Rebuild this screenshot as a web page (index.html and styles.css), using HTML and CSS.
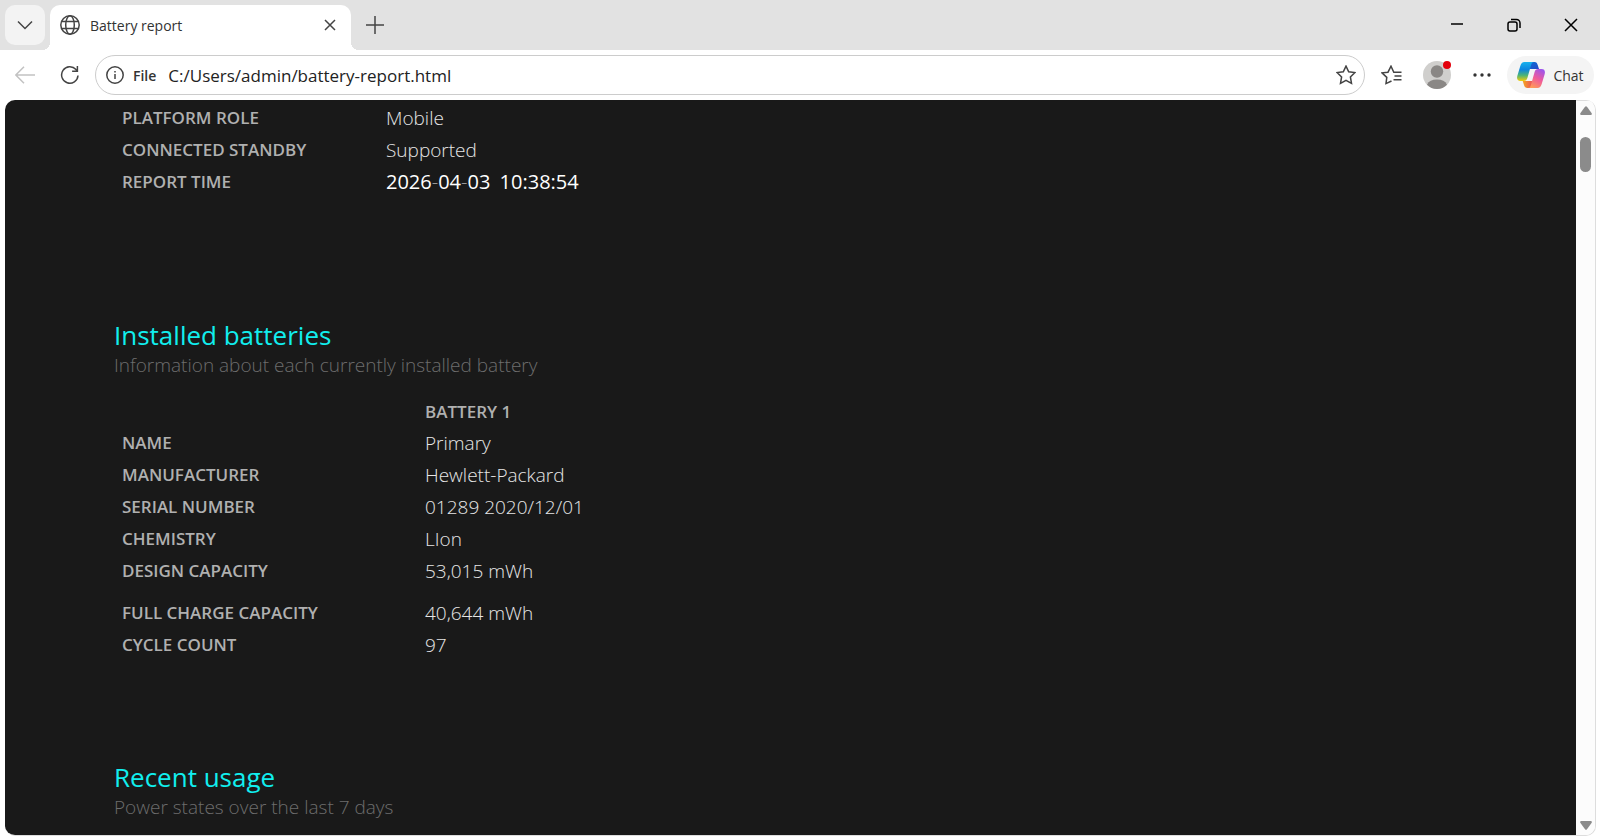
FILE: index.html
```html
<!DOCTYPE html>
<html lang="en">
<head>
  <meta charset="UTF-8">
  <title>Battery report</title>
  <link rel="stylesheet" href="styles.css">
</head>
<body>
<div class="browser">
  <!-- tab strip -->
  <header class="tabs">
    <button class="tab-search" aria-label="Search tabs">
      <svg width="16" height="10" viewBox="0 0 16 10"><path d="M1 1.5l7 7 7-7"/></svg>
    </button>
    <div class="tab">
      <svg width="20" height="20" viewBox="0 0 20 20"><circle cx="10" cy="10" r="9.2"/><ellipse cx="10" cy="10" rx="4.3" ry="9.2"/><path d="M1.6 6.6h16.8M1.6 13.4h16.8"/></svg>
      <span class="tab-title">Battery report</span>
      <button class="tab-close" aria-label="Close tab">
        <svg width="12" height="12" viewBox="0 0 12 12"><path d="M1 1l10 10M11 1L1 11"/></svg>
      </button>
    </div>
    <button class="new-tab" aria-label="New tab">
      <svg width="18" height="18" viewBox="0 0 18 18"><path d="M9 0v18M0 9h18"/></svg>
    </button>
    <div class="window-buttons">
      <button aria-label="Minimize"><svg width="14" height="14" viewBox="0 0 14 14"><path d="M1 6h12"/></svg></button>
      <button aria-label="Restore"><svg width="14" height="14" viewBox="0 0 14 14"><rect x="1" y="4" width="9" height="9" rx="2"/><path d="M4 1.5h5.5a3.5 3.5 0 0 1 3.5 3.5v5"/></svg></button>
      <button aria-label="Close"><svg width="14" height="14" viewBox="0 0 14 14"><path d="M1 1l12 12M13 1L1 13"/></svg></button>
    </div>
  </header>

  <!-- toolbar -->
  <nav class="toolbar">
    <button class="back" aria-label="Back" disabled>
      <svg width="20" height="18" viewBox="0 0 20 18"><path d="M20 9H1M9 .8L.8 9 9 17.2"/></svg>
    </button>
    <button class="reload" aria-label="Refresh">
      <svg width="20" height="20" viewBox="0 0 20 20"><path d="M18 10.5A8.2 8.2 0 1 1 16 4.6L17.3 6M17.4 1v5.2h-5.3"/></svg>
    </button>
    <div class="address">
      <svg width="18" height="18" viewBox="0 0 18 18"><circle cx="9" cy="9" r="8.2"/><path d="M9 8v5M9 5v1.5"/></svg>
      <label for="url">File</label>
      <input id="url" type="text" value="C:/Users/admin/battery-report.html">
      <button aria-label="Add to favorites">
        <svg width="20" height="20" viewBox="0 0 20 20"><path d="M10 1.1l2.7 5.7 6.2.8-4.5 4.3 1.1 6.4-5.5-3-5.5 3 1.1-6.4L1.1 7.6l6.2-.8z"/></svg>
      </button>
    </div>
    <button class="favorites" aria-label="Favorites">
      <svg width="21" height="20" viewBox="0 0 21 20"><path d="M10.500 16l-5.500 2.600.8-6.200L1 7.800l6-.6L10 1.200l2.800 6H20.500M13.500 11h7M12.500 14.800h8"/></svg>
    </button>
    <button class="profile" aria-label="Profile">
      <svg width="28" height="28" viewBox="0 0 28 28"><circle class="disc" cx="14" cy="14" r="14"/><circle class="person" cx="14" cy="10.5" r="6.2"/><path class="person" d="M4 23.7a10.6 7.6 0 0 1 20 0A14 14 0 0 1 4 23.7z"/></svg>
      <span class="dot"></span>
    </button>
    <button class="more" aria-label="Settings and more">
      <svg width="18" height="4" viewBox="0 0 18 4"><circle cx="2" cy="2" r="1.7"/><circle cx="9" cy="2" r="1.7"/><circle cx="16" cy="2" r="1.7"/></svg>
    </button>
    <button class="chat">
      <svg width="28" height="26" viewBox="0 0 28 26">
        <defs>
          <linearGradient id="blue" x1="0" y1="0" x2="0" y2="1"><stop offset="0" stop-color="#18b2ed"/><stop offset=".4" stop-color="#0d85df"/><stop offset=".7" stop-color="#4bb477"/><stop offset="1" stop-color="#f4cc08"/></linearGradient>
          <linearGradient id="pink" x1=".8" y1="0" x2=".3" y2="1"><stop offset="0" stop-color="#9a55ef"/><stop offset=".5" stop-color="#ef5a9b"/><stop offset="1" stop-color="#ff9a58"/></linearGradient>
          <linearGradient id="navy" x1="0" y1="0" x2="1" y2="1"><stop offset="0" stop-color="#0d6fd6"/><stop offset="1" stop-color="#2548c7"/></linearGradient>
          <linearGradient id="red" x1="0" y1="0" x2="1" y2="0"><stop offset="0" stop-color="#f6a61c"/><stop offset="1" stop-color="#ea4b62"/></linearGradient>
        </defs>
        <path fill="url(#navy)" d="M13 0h4.500c2 0 2.600 1 3.200 3l1.300 4H12z"/>
        <path fill="url(#red)" d="M15 26h-4.500c-2 0-2.900-1-3.500-3l-1.300-4H16z"/>
        <path fill="url(#blue)" d="M7.500 0H17c-2 0-2.400 1.300-3 3.300L10.400 16c-.7 2.200-1.700 3-3.700 3H3.500C.5 19-.4 17 .3 14L3.300 4C4.200 1.200 5.200 0 7.500 0z"/>
        <path fill="url(#pink)" d="M20.500 26H11c2 0 2.400-1.300 3-3.300L17.600 10c.7-2.200 1.700-3 3.700-3h3.200c3 0 3.900 2 3.200 5l-3 10c-.9 2.800-1.900 4-4.200 4z"/>
      </svg>
      Chat
    </button>
  </nav>

  <div class="view">
    <main class="report">
      <table class="system">
        <tr><th scope="row">PLATFORM ROLE</th><td>Mobile</td></tr>
        <tr><th scope="row">CONNECTED STANDBY</th><td>Supported</td></tr>
        <tr><th scope="row">REPORT TIME</th><td class="time">2026<i>-</i>04<i>-</i>03 <span>10:38:54</span></td></tr>
      </table>

      <h2>Installed batteries</h2>
      <p>Information about each currently installed battery</p>
      <table class="batteries">
        <thead>
          <tr><td></td><th scope="col">BATTERY 1</th></tr>
        </thead>
        <tbody>
          <tr><th scope="row">NAME</th><td>Primary</td></tr>
          <tr><th scope="row">MANUFACTURER</th><td>Hewlett-Packard</td></tr>
          <tr><th scope="row">SERIAL NUMBER</th><td>01289 2020/12/01</td></tr>
          <tr><th scope="row">CHEMISTRY</th><td>LIon</td></tr>
          <tr><th scope="row">DESIGN CAPACITY</th><td>53,015 mWh</td></tr>
        </tbody>
        <tbody class="charge">
          <tr><th scope="row">FULL CHARGE CAPACITY</th><td>40,644 mWh</td></tr>
          <tr><th scope="row">CYCLE COUNT</th><td>97</td></tr>
        </tbody>
      </table>

      <h2 class="usage">Recent usage</h2>
      <p>Power states over the last 7 days</p>
    </main>
    <div class="scrollbar">
      <button aria-label="Scroll up"><svg width="12" height="9" viewBox="0 0 12 9"><path d="M5 .8q1-1.300 2 0l4.700 6.400q.6 1.600-1 1.800H1.300q-1.600-.2-1-1.800z"/></svg></button>
      <div class="thumb"></div>
      <button aria-label="Scroll down"><svg width="12" height="9" viewBox="0 0 12 9"><path d="M5 8.200q1 1.300 2 0l4.700-6.400q.6-1.600-1-1.800H1.300q-1.600.2-1 1.800z"/></svg></button>
    </div>
  </div>
</div>
</body>
</html>
```
FILE: styles.css
```css
* {
  box-sizing: border-box;
}

body {
  margin: 0;
  font-family: "Open Sans", "Noto Sans", sans-serif;
  color: #333;
  background: #fff;
}

button {
  display: flex;
  align-items: center;
  justify-content: center;
  flex: none;
  padding: 0;
  border: 0;
  background: none;
  font: inherit;
  color: inherit;
}

svg {
  flex: none;
  fill: none;
  stroke: #444;
  stroke-width: 1.5;
}

.browser {
  display: flex;
  flex-direction: column;
  height: 100vh;
}

/* tab strip */
.tabs {
  display: flex;
  flex: none;
  height: 50px;
  padding: 5px 0 0 5px;
  background: #e2e2e2;
}

.tab-search {
  width: 40px;
  height: 40px;
  border-radius: 10px;
  background: #f3f3f3;
}

.tab {
  position: relative;
  display: flex;
  align-items: center;
  gap: 10px;
  width: 301px;
  margin-left: 5px;
  padding: 0 10px 5px;
  border-radius: 10px 10px 0 0;
  background: #fff;
}

/* curved feet of the active tab */
.tab::before,
.tab::after {
  content: "";
  position: absolute;
  bottom: 0;
  width: 8px;
  height: 8px;
}

.tab::before {
  right: 100%;
  background: radial-gradient(circle at 0 0, transparent 8px, #fff 8px);
}

.tab::after {
  left: 100%;
  background: radial-gradient(circle at 100% 0, transparent 8px, #fff 8px);
}

.tab-title {
  flex: 1;
  font-size: 14px;
}

.tab-close {
  width: 22px;
  height: 22px;
}

.new-tab {
  width: 40px;
  height: 40px;
  margin-left: 4px;
}

.window-buttons {
  display: flex;
  margin-left: auto;
  padding-right: 1px;
}

.window-buttons button {
  width: 57px;
  height: 40px;
}

.window-buttons svg {
  stroke: #000;
  stroke-width: 1.5;
}

/* toolbar */
.toolbar {
  display: flex;
  align-items: center;
  flex: none;
  height: 50px;
  padding: 0 6px 0 5px;
}

.toolbar > button {
  width: 45px;
  height: 38px;
}

.toolbar .back {
  width: 40px;
}

.toolbar .reload {
  width: 50px;
}

.back svg {
  stroke: #c2c2c2;
}

.address {
  display: flex;
  align-items: center;
  flex: 1;
  height: 40px;
  margin-right: 4px;
  padding: 0 8px 0 10px;
  border: 1px solid #ccc;
  border-radius: 20px;
}

.address label {
  margin: 0 12px 0 9px;
  font-size: 14px;
  font-weight: 600;
}

.address input {
  flex: 1;
  min-width: 0;
  padding: 0;
  border: 0;
  outline: 0;
  font: 17px "Open Sans", "Noto Sans", sans-serif;
  color: #222;
}

.profile {
  position: relative;
}

.profile svg {
  stroke: none;
}

.disc {
  fill: #d0cfcd;
}

.person {
  fill: #8a8785;
}

.dot {
  position: absolute;
  top: 5px;
  right: 8px;
  width: 8px;
  height: 8px;
  border-radius: 50%;
  background: #e3000b;
}

.more svg {
  fill: #333;
  stroke: none;
}

.toolbar .chat {
  gap: 8px;
  width: 87px;
  margin-left: 3px;
  border-radius: 19px;
  background: #f4f4f4;
  font-size: 14px;
}

.chat svg {
  stroke: none;
}

/* page area */
.view {
  display: flex;
  flex: 1;
  min-height: 0;
  margin: 0 4px 4px 5px;
  border-right: 1px solid #ddd;
  border-bottom: 1px solid #ddd;
  border-radius: 10px;
  overflow: hidden;
}

.report {
  flex: 1;
  padding: 2px 0 0 109px;
  background: #191919;
  color: #e6e6e6;
  overflow: hidden;
}

.scrollbar {
  display: flex;
  flex-direction: column;
  align-items: center;
  width: 19px;
  border-top: 1px solid #ddd;
  background: #fcfcfc;
}

.scrollbar button {
  width: 19px;
  height: 19px;
}

.scrollbar svg {
  fill: #8b8b8b;
  stroke: none;
}

.thumb {
  width: 11px;
  height: 35px;
  margin: 17px 0 auto;
  border-radius: 6px;
  background: #8b8b8b;
}

table {
  border-collapse: collapse;
}

th,
td {
  height: 32px;
  padding: 0 8px;
  text-align: left;
  white-space: nowrap;
  line-height: 24px;
}

th {
  font-size: 17px;
  font-weight: 600;
  color: #b0b0b0;
}

td {
  font-size: 19px;
  font-weight: 300;
}

.system th {
  width: 264px;
}

.time {
  font-size: 20px;
  font-weight: 500;
  color: #fff;
}

.time i {
  font-style: normal;
  font-weight: 300;
  color: #999;
}

.time span {
  margin-left: 4px;
}

.batteries {
  margin-top: 19px;
}

.batteries thead th,
.batteries thead td {
  height: 30px;
}

.batteries tbody th {
  width: 303px;
}

.charge::before {
  content: "";
  display: block;
  height: 10px;
}

h2 {
  margin: 120px 0 0;
  font-size: 26px;
  font-weight: 400;
  line-height: 34px;
  color: #11eeee;
}

.usage {
  margin-top: 99px;
}

p {
  margin: 0;
  font-size: 19px;
  font-weight: 300;
  line-height: 26px;
  color: #6d6d6d;
}
```
